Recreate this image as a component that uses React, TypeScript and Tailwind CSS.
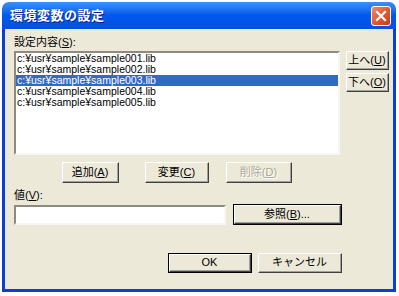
import React from 'react';

const font = "font-['Liberation_Sans','Noto_Sans_CJK_JP',sans-serif]";

const items = [
  'c:¥usr¥sample¥sample001.lib',
  'c:¥usr¥sample¥sample002.lib',
  'c:¥usr¥sample¥sample003.lib',
  'c:¥usr¥sample¥sample004.lib',
  'c:¥usr¥sample¥sample005.lib',
];

interface BtnProps {
  label: React.ReactNode;
  className?: string;
  isDefault?: boolean;
  disabled?: boolean;
}

function Btn({ label, className = '', isDefault, disabled }: BtnProps) {
  return (
    <div
      className={`${className} ${isDefault ? 'border border-black' : ''} shrink-0 flex`}
    >
      <div className="flex-1 flex border-t border-l border-t-white border-l-white border-b border-r border-b-[#404040] border-r-[#404040]">
        <div
          className={`flex-1 flex items-center justify-center border-b border-r border-b-[#a0a0a0] border-r-[#a0a0a0] bg-[#ece9d8] text-[11px] leading-none ${
            disabled ? 'text-[#aca899] [text-shadow:1px_1px_0_#fff]' : 'text-black'
          }`}
        >
          {label}
        </div>
      </div>
    </div>
  );
}

function Acc({ pre, k, post = '' }: { pre: string; k: string; post?: string }) {
  return (
    <span>
      {pre}(<span className="underline">{k}</span>){post}
    </span>
  );
}

export default function App() {
  return (
    <div className={`w-[399px] h-[296px] bg-white pt-[2px] pl-[2px] ${font}`}>
      <div className="w-[394px] h-[290px] flex flex-col rounded-t-[7px] overflow-hidden">
        {/* Title bar */}
        <div className="h-[27px] shrink-0 flex items-center justify-between pl-[8px] pr-[5px] bg-gradient-to-b from-[#3d8ff8] via-[#0058ee] to-[#0650dd]">
          <span className="text-white font-bold text-[13px] tracking-[0.5px] [text-shadow:1px_1px_0_#0a1e8c]">
            環境変数の設定
          </span>
          <div className="w-[20px] h-[20px] rounded-[3px] border border-white bg-gradient-to-br from-[#ec8a6b] via-[#e05a33] to-[#c43d12] flex items-center justify-center">
            <svg width="12" height="12" viewBox="0 0 12 12">
              <path d="M2 2 L10 10 M10 2 L2 10" stroke="white" strokeWidth="2.2" strokeLinecap="square" />
            </svg>
          </div>
        </div>

        {/* Body */}
        <div className="flex-1 border-x-[3px] border-b-[3px] border-[#0a3fd6] bg-[#ece9d8] flex flex-col pl-[9px] pt-[7px]">
          <div className="h-[13px] text-[11px] leading-[13px] text-black">
            <Acc pre="設定内容" k="S" post=":" />
          </div>

          <div className="mt-[2px] flex">
            <div className="w-[326px] h-[104px] border-2 border-t-[#8d8b80] border-l-[#8d8b80] border-b-[#f7f6f1] border-r-[#f7f6f1] bg-white">
              {items.map((it, i) => (
                <div
                  key={it}
                  className={`h-[11px] leading-[11px] text-[10.5px] pl-[1px] ${
                    i === 2 ? 'bg-[#316ac5] text-white' : 'text-black'
                  }`}
                >
                  {it}
                </div>
              ))}
            </div>
            <div className="ml-[6px] flex flex-col gap-[3px]">
              <Btn className="w-[43px] h-[19px]" label={<Acc pre="上へ" k="U" />} />
              <Btn className="w-[43px] h-[19px]" label={<Acc pre="下へ" k="O" />} />
            </div>
          </div>

          <div className="mt-[7px] flex h-[21px]">
            <Btn className="ml-[48px] w-[57px]" label={<Acc pre="追加" k="A" />} />
            <Btn className="ml-[26px] w-[64px]" label={<Acc pre="変更" k="C" />} />
            <Btn className="ml-[17px] w-[66px]" disabled label={<Acc pre="削除" k="D" />} />
          </div>

          <div className="mt-[6px] h-[13px] text-[11px] leading-[13px] text-black">
            <Acc pre="値" k="V" post=":" />
          </div>

          <div className="mt-[3px] flex items-start">
            <div className="w-[212px] h-[20px] border-2 border-t-[#8d8b80] border-l-[#8d8b80] border-b-[#f7f6f1] border-r-[#f7f6f1] bg-white" />
            <Btn className="ml-[7px] -mt-[1px] w-[109px] h-[21px]" isDefault label={<Acc pre="参照" k="B" post="..." />} />
          </div>

          <div className="mt-[28px] flex h-[20px]">
            <Btn className="ml-[154px] w-[84px]" isDefault label="OK" />
            <Btn className="ml-[6px] w-[84px]" label="キャンセル" />
          </div>
        </div>
      </div>
    </div>
  );
}
